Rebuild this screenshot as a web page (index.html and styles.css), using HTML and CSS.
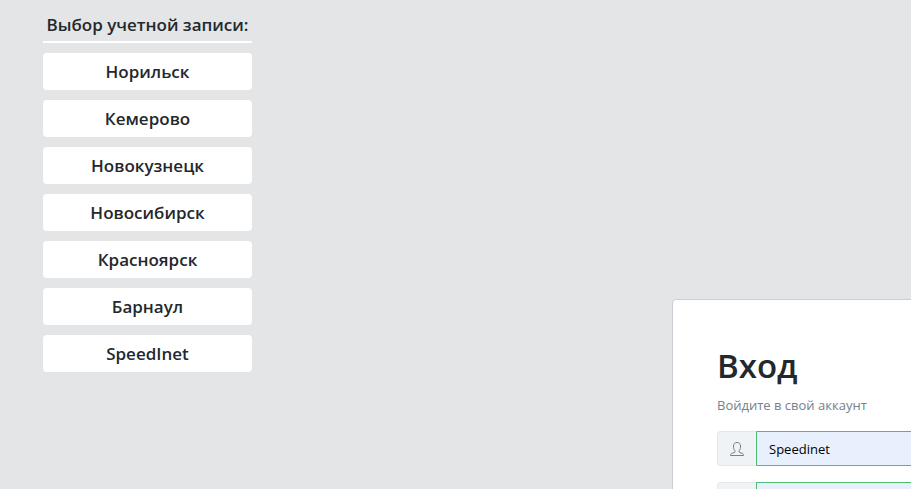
FILE: index.html
```html
<!DOCTYPE html>
<html lang="ru">
<head>
  <meta charset="utf-8">
  <title>Вход</title>
  <link rel="stylesheet" href="styles.css">
</head>
<body>
  <div class="page">
    <aside class="accounts">
      <h2 class="accounts-title">Выбор учетной записи:</h2>
      <button class="account" type="button">Норильск</button>
      <button class="account" type="button">Кемерово</button>
      <button class="account" type="button">Новокузнецк</button>
      <button class="account" type="button">Новосибирск</button>
      <button class="account" type="button">Красноярск</button>
      <button class="account" type="button">Барнаул</button>
      <button class="account" type="button">SpeedInet</button>
    </aside>
    <main class="card">
      <form>
        <h1 class="title">Вход</h1>
        <p class="subtitle">Войдите в свой аккаунт</p>
        <div class="field">
          <label class="addon" for="login">
            <svg width="16" height="16" viewBox="0 0 16 16" aria-hidden="true">
              <path d="M6 9.800C4.700 8.800 4.500 6.500 4.500 5C4.500 2.700 5.800 1.500 8 1.500s3.500 1.200 3.500 3.500c0 1.500-.2 3.800-1.500 4.800v1c0 .4.300.6 1 .8l2 .6c1 .3 1.500 1 1.500 2.300H1.500c0-1.300.5-2 1.500-2.300l2-.6c.7-.2 1-.4 1-.8z"/>
            </svg>
          </label>
          <input class="input" id="login" type="text" value="Speedinet" aria-label="Логин">
        </div>
        <div class="field">
          <label class="addon" for="password"></label>
          <input class="input" id="password" type="password" aria-label="Пароль">
        </div>
      </form>
    </main>
  </div>
</body>
</html>
```
FILE: styles.css
```css
* {
  box-sizing: border-box;
}

body {
  margin: 0;
  background: #e4e5e6;
  color: #23282c;
  font: 14px/21px "Open Sans", "Noto Sans", sans-serif;
}

.page {
  display: grid;
  grid-template-columns: 209px minmax(450px, 1fr);
  column-gap: 420px;
  align-items: start;
  height: 100vh;
  padding-left: 43px;
  overflow: hidden;
}

.accounts {
  display: flex;
  flex-direction: column;
  gap: 10px;
  padding-top: 11px;
}

.accounts-title {
  margin: 0;
  padding-bottom: 3px;
  border-bottom: 2px solid #fff;
  font-size: 17px;
  font-weight: 600;
  line-height: 27px;
  text-align: center;
  white-space: nowrap;
}

.account {
  height: 37px;
  padding: 0 12px;
  border: 0;
  border-radius: 4px;
  background: #fff;
  color: #23282c;
  font: inherit;
  font-size: 17px;
  font-weight: 600;
  cursor: pointer;
}

.card {
  margin-top: 299px;
  padding: 45px 44px;
  border: 1px solid #c8ced3;
  border-radius: 4px;
  background: #fff;
}

.title {
  margin: 0 0 8px;
  font-size: 33px;
  font-weight: 600;
  line-height: 42px;
}

.subtitle {
  margin: 0 0 15px;
  color: #73818f;
  font-size: 13px;
}

.field {
  display: flex;
  height: 35px;
  margin-bottom: 16px;
}

.addon {
  display: flex;
  align-items: center;
  justify-content: center;
  width: 39px;
  border: 1px solid #e4e7ea;
  border-right: 0;
  border-radius: 4px 0 0 4px;
  background: #f0f3f5;
}

.addon svg {
  fill: none;
  stroke: #73818f;
  stroke-width: 1;
}

.input {
  flex: 1;
  min-width: 0;
  padding: 1px 12px 0;
  border: 1px solid #4dbd74;
  border-radius: 0 4px 4px 0;
  background: #e8f0fe;
  color: #000;
  font: inherit;
  font-size: 13px;
}
```
